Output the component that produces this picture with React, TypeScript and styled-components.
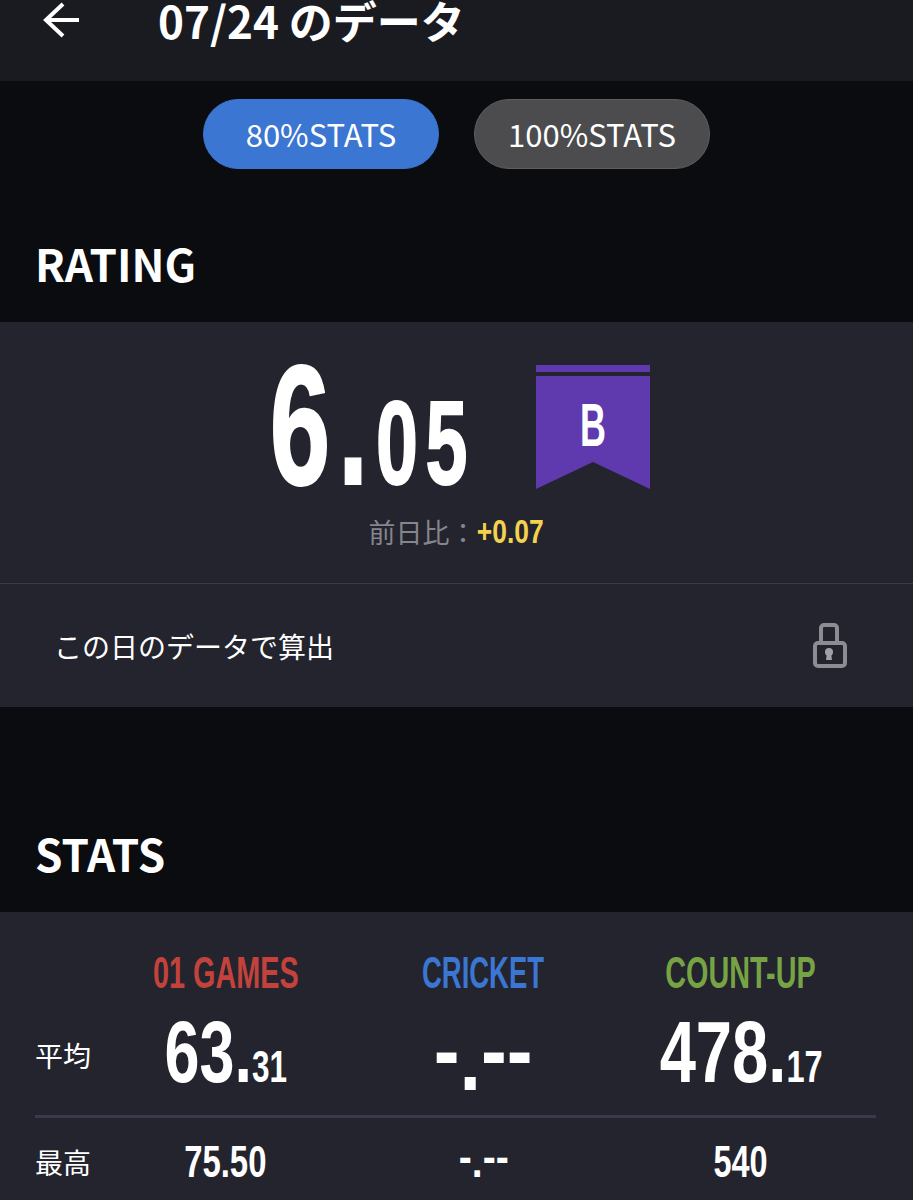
import React from 'react';
import styled, { createGlobalStyle } from 'styled-components';

const GlobalStyle = createGlobalStyle`
	html, body {
		margin: 0;
		padding: 0;
		background: #0b0c10;
		font-family: "Noto Sans CJK JP", "Noto Sans", sans-serif;
		color: #fff;
	}
`;

const Page = styled.div`
	width: 913px;
	height: 1200px;
	overflow: hidden;
	background: #0b0c10;
`;

const Header = styled.header`
	height: 81px;
	background: #1a1b21;
	display: flex;
	align-items: flex-start;
	padding-left: 42px;
	box-sizing: border-box;
`;

const BackIcon = styled.svg`
	width: 38px;
	height: 36px;
	margin-top: 2px;
	flex: none;
`;

const Title = styled.h1`
	margin: 0 0 0 78px;
	font-size: 44px;
	line-height: 40px;
	font-weight: 700;
	white-space: nowrap;
`;

const Tabs = styled.div`
	display: flex;
	gap: 35px;
	padding: 18px 0 0 203px;
`;

const Tab = styled.div<{ $active?: boolean }>`
	width: 236px;
	height: 70px;
	box-sizing: border-box;
	padding-bottom: 2px;
	border-radius: 35px;
	background: ${(p) => (p.$active ? '#3b76d2' : '#4c4c4e')};
	border: 1px solid ${(p) => (p.$active ? '#3b76d2' : '#5e5e60')};
	display: flex;
	align-items: center;
	justify-content: center;
	font-size: 31px;
	line-height: 1;
`;

const SectionTitle = styled.h2`
	margin: 0;
	padding-left: 35px;
	font-size: 44px;
	font-weight: 700;
	line-height: 50px;
`;

const RatingTitle = styled(SectionTitle)`
	padding-top: 69px;
	padding-bottom: 34px;
`;

const StatsTitle = styled(SectionTitle)`
	padding-top: 121px;
	padding-bottom: 34px;
`;

const Card = styled.section`
	background: #23242e;
`;

const RatingBody = styled.div`
	height: 261px;
	border-bottom: 1px solid #393a4e;
	display: flex;
	flex-direction: column;
	align-items: center;
`;

const RatingRow = styled.div`
	display: flex;
	align-items: flex-start;
	padding-top: 19px;
	height: 168px;
	margin-left: 7px;
`;

const Din = styled.span`
	display: inline-block;
	font-family: "Liberation Sans Narrow", "Liberation Sans", sans-serif;
	font-weight: 700;
	transform-origin: center;
	white-space: nowrap;
`;

const BigScore = styled(Din)`
	font-size: 170px;
	line-height: 168px;
	width: 200px;
	box-sizing: border-box;
	padding-left: 8px;
	display: flex;
	justify-content: center;
	align-items: baseline;
	letter-spacing: 12px;
	-webkit-text-stroke: 2px #fff;
	transform: scaleX(0.64);
`;

const ScoreSmall = styled.span`
	font-size: 118px;
	letter-spacing: 12px;
`;

const Ribbon = styled.div`
	position: relative;
	width: 114px;
	height: 124px;
	margin: 24px 0 0 66px;
`;

const RibbonShape = styled.svg`
	display: block;
`;

const RibbonLetter = styled(Din)`
	position: absolute;
	left: 0;
	right: 0;
	top: 27px;
	text-align: center;
	font-size: 62px;
	line-height: 66px;
	transform: scaleX(0.58);
`;

const Compare = styled.div`
	display: flex;
	align-items: center;
	margin: 5px 7px 0 0;
	font-size: 27px;
	line-height: 36px;
	color: #85858c;
`;

const Delta = styled(Din)`
	color: #f3d24f;
	font-size: 33px;
	width: 68px;
	margin-left: -7px;
	text-align: center;
	transform: scaleX(0.8);
`;

const BasisRow = styled.div`
	height: 123px;
	display: flex;
	align-items: center;
	justify-content: space-between;
	padding: 0 65px 0 54px;
	font-size: 28px;
`;

const LockIcon = styled.svg`
	width: 36px;
	height: 46px;
	margin-top: -2px;
`;

const StatsGrid = styled.div`
	display: grid;
	grid-template-columns: 62px repeat(3, 257.5px);
	grid-template-rows: 64px 99px 25px 66px;
	align-items: center;
	padding: 29px 37px 10px 35px;
`;

const Cell = styled.div`
	text-align: center;
`;

const GameName = styled(Din)<{ $color: string; $scale: number }>`
	color: ${(p) => p.$color};
	font-size: 45px;
	line-height: 64px;
	transform: scaleX(${(p) => p.$scale});
`;

const RowLabel = styled.div`
	font-size: 28px;
	line-height: 40px;
`;

const AverageValue = styled(Din)<{ $scale: number }>`
	font-size: 88px;
	line-height: 76px;
	padding-top: 10px;
	transform: scaleX(${(p) => p.$scale});
`;

const AverageSmall = styled.span`
	font-size: 44px;
`;

const BestValue = styled(Din)<{ $scale: number }>`
	font-size: 45px;
	line-height: 60px;
	transform: scaleX(${(p) => p.$scale});
`;

// the font's hyphen sits lower than the reference's, line-height 0 keeps the row height
const Dash = styled.span<{ $lift: number }>`
	line-height: 0;
	vertical-align: ${(p) => p.$lift}px;
`;

const Divider = styled.div`
	grid-column: 1 / -1;
	height: 3px;
	width: 841px;
	background: #3a3a4e;
`;

const games = [
	{ name: '01 GAMES', color: '#c3423c', nameScale: 0.64, whole: '63.', small: '31', best: '75.50', avgScale: 0.715, bestScale: 0.73 },
	{ name: 'CRICKET', color: '#3b76d2', nameScale: 0.61, whole: '', small: '', best: '', avgScale: 0.88, bestScale: 0.87 },
	{ name: 'COUNT-UP', color: '#76a344', nameScale: 0.64, whole: '478.', small: '17', best: '540', avgScale: 0.74, bestScale: 0.72 },
];

const NoScore: React.FC<{ lift: number }> = ({ lift }) => (
	<>
		<Dash $lift={lift}>-</Dash>.<Dash $lift={lift}>--</Dash>
	</>
);

export default function App() {
	return (
		<Page>
			<GlobalStyle />
			<Header>
				<BackIcon viewBox="0 0 38 36" fill="none" stroke="#fff" strokeWidth="4">
					<path d="M37 18H4M21 2 4 18l17 16" />
				</BackIcon>
				<Title>07/24 のデータ</Title>
			</Header>
			<Tabs>
				<Tab $active>80%STATS</Tab>
				<Tab>100%STATS</Tab>
			</Tabs>
			<RatingTitle>RATING</RatingTitle>
			<Card>
				<RatingBody>
					<RatingRow>
						<BigScore>
							6.<ScoreSmall>05</ScoreSmall>
						</BigScore>
						<Ribbon>
							<RibbonShape width="114" height="124" viewBox="0 0 114 124">
								<path fill="#5f39ae" d="M0 0h114v7H0zM0 11h114v113L57 97 0 124z" />
							</RibbonShape>
							<RibbonLetter>B</RibbonLetter>
						</Ribbon>
					</RatingRow>
					<Compare>
						前日比：<Delta>+0.07</Delta>
					</Compare>
				</RatingBody>
				<BasisRow>
					この日のデータで算出
					<LockIcon viewBox="0 0 36 46" fill="none">
						<path d="M9 21V6a3 3 0 0 1 3-3h10a3 3 0 0 1 3 3v15" stroke="#8c8c92" strokeWidth="4" />
						<rect x="3" y="21" width="30" height="23" rx="3" stroke="#8c8c92" strokeWidth="4" />
						<circle cx="17" cy="30" r="4" fill="#a0a0a6" />
						<path d="M15 31h4l1 7h-6z" fill="#a0a0a6" />
					</LockIcon>
				</BasisRow>
			</Card>
			<StatsTitle>STATS</StatsTitle>
			<Card>
				<StatsGrid>
					<span />
					{games.map((g) => (
						<Cell key={g.name}>
							<GameName $color={g.color} $scale={g.nameScale}>
								{g.name}
							</GameName>
						</Cell>
					))}
					<RowLabel>平均</RowLabel>
					{games.map((g) => (
						<Cell key={g.name}>
							<AverageValue $scale={g.avgScale}>
								{g.whole ? g.whole : <NoScore lift={10} />}
								{g.small && <AverageSmall>{g.small}</AverageSmall>}
							</AverageValue>
						</Cell>
					))}
					<Divider />
					<RowLabel>最高</RowLabel>
					{games.map((g) => (
						<Cell key={g.name}>
							<BestValue $scale={g.bestScale}>{g.best ? g.best : <NoScore lift={5} />}</BestValue>
						</Cell>
					))}
				</StatsGrid>
			</Card>
		</Page>
	);
}
